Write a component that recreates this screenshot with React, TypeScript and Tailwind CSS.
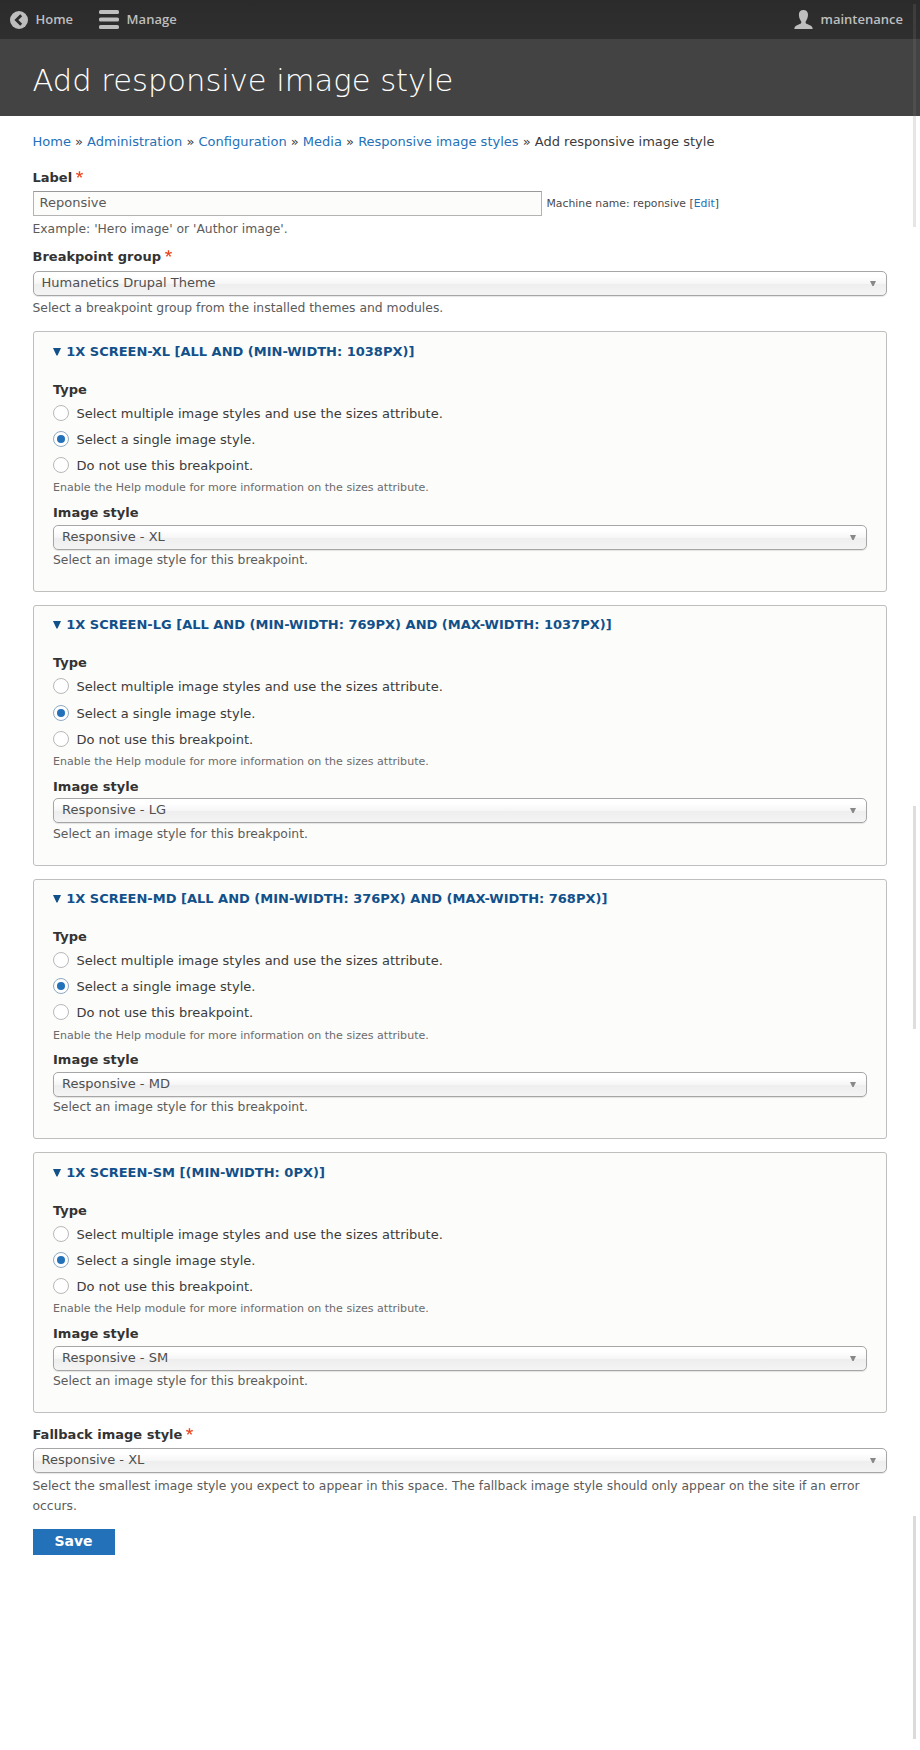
import React from "react";

const groups = [
  { title: "1x screen-xl [all and (min-width: 1038px)]", style: "Responsive - XL" },
  { title: "1x screen-lg [all and (min-width: 769px) and (max-width: 1037px)]", style: "Responsive - LG" },
  { title: "1x screen-md [all and (min-width: 376px) and (max-width: 768px)]", style: "Responsive - MD" },
  { title: "1x screen-sm [(min-width: 0px)]", style: "Responsive - SM" },
];

const options = [
  "Select multiple image styles and use the sizes attribute.",
  "Select a single image style.",
  "Do not use this breakpoint.",
];

const crumbs = ["Home", "Administration", "Configuration", "Media", "Responsive image styles"];

function Required() {
  return (
    <svg className="ml-1 mt-1 size-[7px] shrink-0" viewBox="0 0 16 16" fill="#e9441c">
      <path d="m0 7.562 1.114-3.438c2.565.906 4.43 1.688 5.59 2.35-.306-2.921-.467-4.93-.484-6.027h3.511c-.05 1.597-.234 3.6-.558 6.003 1.664-.838 3.566-1.613 5.714-2.325l1.113 3.437c-2.05.678-4.06 1.131-6.028 1.356.984.856 2.372 2.381 4.166 4.575l-2.906 2.059c-.935-1.274-2.041-3.009-3.316-5.206-1.194 2.275-2.244 4.013-3.147 5.206l-2.856-2.059c1.872-2.307 3.211-3.832 4.017-4.575-2.081-.402-4.058-.856-5.928-1.356" />
    </svg>
  );
}

function Label({ children, required }: { children: React.ReactNode; required?: boolean }) {
  return (
    <label className="flex h-[22px] text-[13px] font-bold leading-[22px] text-[#333]">
      {children}
      {required && <Required />}
    </label>
  );
}

function Select({ value }: { value: string }) {
  return (
    <div className="flex h-[25px] items-center justify-between rounded-[5px] border border-[#a6a6a6] bg-[linear-gradient(to_bottom,#fff_20%,#f6f6f6_50%,#eee_52%,#f4f4f4_100%)] pl-2 pr-[10px] text-[13px] leading-[23px] text-[#4f4f4f] shadow-[0_1px_1px_rgba(0,0,0,0.1)]">
      <span className="h-[25px]">{value}</span>
      <svg className="h-[5px] w-[6px]" viewBox="0 0 6 5" fill="#888">
        <path d="M0 0h6L3.6 5H2.4z" />
      </svg>
    </div>
  );
}

function Radio({ checked }: { checked: boolean }) {
  return (
    <span
      className={
        "mt-[5.05px] flex size-4 items-center justify-center rounded-full border bg-white " +
        (checked ? "border-[#8fa9c0]" : "border-[#b8b8b8]")
      }
    >
      {checked && <span className="size-2 rounded-full bg-[#2371b8]" />}
    </span>
  );
}

function Group({ title, style }: { title: string; style: string }) {
  return (
    <section className="mb-[13px] h-[260.7px] rounded-[3px] border border-[#bfbfbf] bg-[#fcfcfa] pl-[19.5px] pr-[19px] pt-[8.3px]">
      <h2 className="flex h-[22px] items-center text-[13px] font-bold uppercase leading-[22px] text-[#12508a]">
        <svg className="ml-[-0.5px] mr-[5.7px] h-2 w-2" viewBox="0 0 8 8" fill="#12508a">
          <path d="M0 0h8L4.500 7.600h-1z" />
        </svg>
        {title}
      </h2>
      <div className="mb-[-0.95px] mt-4">
        <Label>Type</Label>
      </div>
      {options.map((o, i) => (
        <div key={o} className="flex h-[26.15px] items-start gap-[7.5px] text-[13px] leading-[26px] text-[#3b3b3b]">
          <Radio checked={i === 1} />
          <span className="mt-[1.05px]">{o}</span>
        </div>
      ))}
      <p className="mt-[1.2px] h-[18px] text-[11.05px] leading-[18px] text-[#6b6b6b]">
        Enable the Help module for more information on the sizes attribute.
      </p>
      <div className="mb-[0.7px] mt-[4.65px]">
        <Label>Image style</Label>
      </div>
      <Select value={style} />
      <p className="mt-[0.3px] text-[12.35px] leading-[20px] text-[#5b5b5b]">Select an image style for this breakpoint.</p>
    </section>
  );
}

function Bar({ className }: { className: string }) {
  return <div className={"absolute left-[913px] h-[223px] w-[3px] " + className} />;
}

export default function App() {
  return (
    <div className="relative h-[1750px] w-[920px] overflow-hidden bg-white font-['DejaVu_Sans',sans-serif] text-[13px]">
      <nav className="flex h-[39px] items-center bg-linear-to-b from-[#2b2b2b] to-[#2f2f2f] pl-[10px] pr-[17px] font-['Open_Sans',sans-serif] text-[13px] font-semibold text-[#bebebe]">
        <svg className="mt-px size-[18px]" viewBox="0 0 18 18">
          <circle cx="9" cy="9" r="9" fill="#bebebe" />
          <path d="M11.2 4.3 6.4 9l4.8 4.7" fill="none" stroke="#2d2d2d" strokeWidth="2.8" />
        </svg>
        <span className="ml-[7.5px]">Home</span>
        <svg className="ml-[26px] h-[19px] w-5" viewBox="0 0 20 19" fill="#bebebe">
          <rect width="20" height="4" rx="1.6" />
          <rect y="7.5" width="20" height="4" rx="1.6" />
          <rect y="15" width="20" height="4" rx="1.6" />
        </svg>
        <span className="ml-[7.5px]">Manage</span>
        <svg className="ml-auto h-[19px] w-[19px]" viewBox="0 0 19 19" fill="#bebebe">
          <path d="M9.400 0C6.500 0 4.900 1.800 4.900 4.600c0 2.400.7 4.900 2 6.400.4.500.5 1 .4 1.600-.2 1-1.100 1.500-2.600 2C2.500 15.400.3 16.300.3 19h18.400c0-2.700-2.200-3.600-4.500-4.400-1.500-.5-2.400-1-2.600-2-.1-.6 0-1.100.4-1.600 1.300-1.500 2-4 2-6.400C14 1.800 12.300 0 9.400 0z" />
        </svg>
        <span className="ml-2">maintenance</span>
      </nav>
      <header className="h-[77px] bg-[#434343] pl-[32.5px] pt-[20px]">
        <h1 className="text-[30.55px] font-extralight leading-[44px] text-white">Add responsive image style</h1>
      </header>
      <main className="pl-[32.5px] pr-[33px] pt-[15px]">
        <div className="h-[22px] whitespace-nowrap leading-[22px] text-[#3b3b3b]">
          {crumbs.map((c) => (
            <React.Fragment key={c}>
              <a className="text-[#2371b8]">{c}</a>
              {" » "}
            </React.Fragment>
          ))}
          Add responsive image style
        </div>
        <div className="mb-[2px] mt-[14px]">
          <Label required>Label</Label>
        </div>
        <div className="flex items-center">
          <div className="h-[25px] w-[509px] border border-[#b3b3b3] border-t-[#999] bg-[#fcfcfa] pl-[6px] leading-[22px] text-[#595959]">
            Reponsive
          </div>
          <span className="ml-[5px] mt-px text-[10.83px] text-[#4a4a4a]">
            Machine name: reponsive [<a className="text-[#2371b8]">Edit</a>]
          </span>
        </div>
        <p className="mt-[2px] h-[22px] text-[12.35px] leading-[22px] text-[#5b5b5b]">Example: 'Hero image' or 'Author image'.</p>
        <div className="mb-[3px] mt-[6px]">
          <Label required>Breakpoint group</Label>
        </div>
        <Select value="Humanetics Drupal Theme" />
        <p className="mb-[12.3px] mt-px h-[22px] text-[12.35px] leading-[22px] text-[#5b5b5b]">
          Select a breakpoint group from the installed themes and modules.
        </p>
        {groups.map((g) => (
          <Group key={g.title} {...g} />
        ))}
        <div className="mb-[2px] mt-[-2px]">
          <Label required>Fallback image style</Label>
        </div>
        <Select value="Responsive - XL" />
        <p className="mt-[3px] text-[12.35px] leading-[20px] text-[#5b5b5b]">
          Select the smallest image style you expect to appear in this space. The fallback image style should only appear on the site if an error
          occurs.
        </p>
        <button className="mt-[13px] block h-[26px] w-[82px] bg-[#2371b8] pb-[1px] text-[14px] font-bold leading-[25px] text-white">
          Save
        </button>
      </main>
      <Bar className="top-1 bg-[#808080]/20" />
      <Bar className="top-[806px] bg-[#dedede]" />
      <Bar className="top-[1516px] bg-[#dbdbdb]" />
    </div>
  );
}
